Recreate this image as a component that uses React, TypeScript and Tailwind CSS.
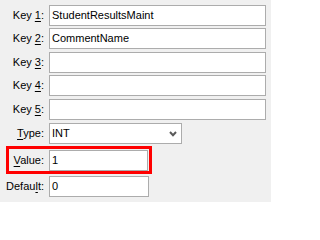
import React from 'react'

const font = { fontFamily: '"Liberation Sans", Arial, sans-serif' }

function Label({ pre, accel, post, className = 'w-[44px]' }: { pre: string; accel: string; post: string; className?: string }) {
  return (
    <div className={`${className} shrink-0 text-right text-[11px] leading-none text-black`}>
      {pre}
      <span className="underline underline-offset-[2px]">{accel}</span>
      {post}
    </div>
  )
}

function TextBox({ value = '', className }: { value?: string; className: string }) {
  return (
    <div className={`${className} h-[21px] shrink-0 flex items-center border border-[#acacac] bg-white pl-[2px] text-[11px] text-black`}>
      {value}
    </div>
  )
}

const keys = [
  { n: '1', value: 'StudentResultsMaint', mt: 'mt-[5px]' },
  { n: '2', value: 'CommentName', mt: 'mt-[2px]' },
  { n: '3', value: '', mt: 'mt-[3px]' },
  { n: '4', value: '', mt: 'mt-[2px]' },
  { n: '5', value: '', mt: 'mt-[3px]' },
]

export default function App() {
  return (
    <div className="w-[271px] h-[202px] bg-[#f0f0f0] flex flex-col overflow-hidden" style={font}>
      {keys.map((k) => (
        <div key={k.n} className={`${k.mt} flex items-center`}>
          <Label pre="Key " accel={k.n} post=":" />
          <TextBox value={k.value} className="ml-[5px] w-[217px]" />
        </div>
      ))}

      {/* Type */}
      <div className="mt-[3px] flex items-center">
        <Label pre="" accel="T" post="ype:" />
        <div className="ml-[5px] w-[133px] h-[21px] flex items-center justify-between border border-[#acacac] bg-white pl-[2px] pr-[4px] text-[11px] text-black">
          <span>INT</span>
          <svg width="8" height="6" viewBox="0 0 8 6" className="text-[#5a5a5a]">
            <path d="M1 1 L4 4.2 L7 1" fill="none" stroke="currentColor" strokeWidth="2" />
          </svg>
        </div>
      </div>

      {/* Value (highlighted) */}
      <div className="mt-[2px] ml-[6px] w-[146px] h-[28px] border-[3px] border-[#ff0000] flex items-start pt-[1px]">
        <Label pre="" accel="V" post="alue:" className="w-[35px] self-center" />
        <TextBox value="1" className="ml-[5px] w-[99px]" />
      </div>

      {/* Default */}
      <div className="mt-[2px] flex items-center">
        <Label pre="Defau" accel="l" post="t:" />
        <TextBox value="0" className="ml-[5px] w-[100px]" />
      </div>
    </div>
  )
}
